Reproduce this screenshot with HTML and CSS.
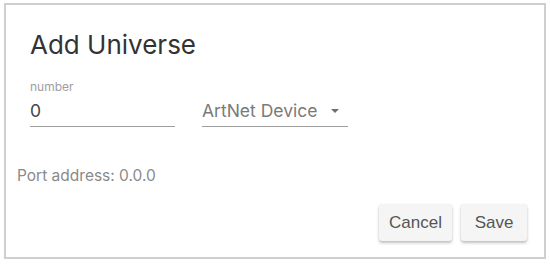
FILE: index.html
```html
<!DOCTYPE html>
<html>
<head>
<meta charset="utf-8">
<link rel="stylesheet" href="styles.css">
</head>
<body>
<div class="dialog">
  <h2 class="title">Add Universe</h2>
  <div class="fields">
    <div class="field field-number">
      <label class="label">number</label>
      <div class="value">0</div>
    </div>
    <div class="field field-select">
      <div class="value select-value">ArtNet Device<svg class="arrow" width="8" height="4" viewBox="0 0 8 4"><path d="M0 0 L8 0 L4 4 Z" fill="#6e6e6e"/></svg></div>
    </div>
  </div>
  <div class="port">Port address: 0.0.0</div>
  <div class="actions">
    <button class="btn">Cancel</button>
    <button class="btn">Save</button>
  </div>
</div>
</body>
</html>
```
FILE: styles.css
```css
* { box-sizing: border-box; }
html, body { margin: 0; padding: 0; background: #fff; }
body { padding: 3px 4px 5px 4px; font-family: Inter, "Noto Sans", sans-serif; }
.dialog {
  width: 542px;
  height: 256px;
  border: 2px solid #cfcfcf;
  display: flex;
  flex-direction: column;
  padding: 0 0 0 11px;
}
.title {
  margin: 24px 0 0 13px;
  font-size: 26px;
  font-weight: 400;
  line-height: 31px;
  color: #333;
}
.fields {
  display: flex;
  gap: 27px;
  margin: 19px 0 0 13px;
  align-items: flex-end;
}
.field { border-bottom: 1px solid #9e9e9e; }
.field-number { width: 145px; }
.field-select { width: 146px; }
.label { display: block; font-size: 12px; color: #9e9e9e; line-height: 15px; }
.value { font-size: 17.5px; color: #444; line-height: 21px; padding: 6px 0 5px; }
.select-value { color: #7a7a7a; display: flex; align-items: center; }
.arrow { margin-left: 14px; margin-top: 1px; }
.port {
  margin: 39px 0 0 0;
  font-size: 15.5px;
  color: #8a8a8a;
  line-height: 19px;
}
.actions {
  display: flex;
  justify-content: flex-end;
  gap: 9px;
  margin: 19px 17px 0 0;
}
.btn {
  font-family: "Liberation Sans", Arial, sans-serif;
  font-size: 17px;
  color: #555;
  background: #f5f5f5;
  border: none;
  border-radius: 3px;
  height: 37px;
  min-width: 66px;
  padding: 0 10px;
  box-shadow: 0 2px 3px rgba(0,0,0,0.25), 0 0 1px rgba(0,0,0,0.1);
}
```
